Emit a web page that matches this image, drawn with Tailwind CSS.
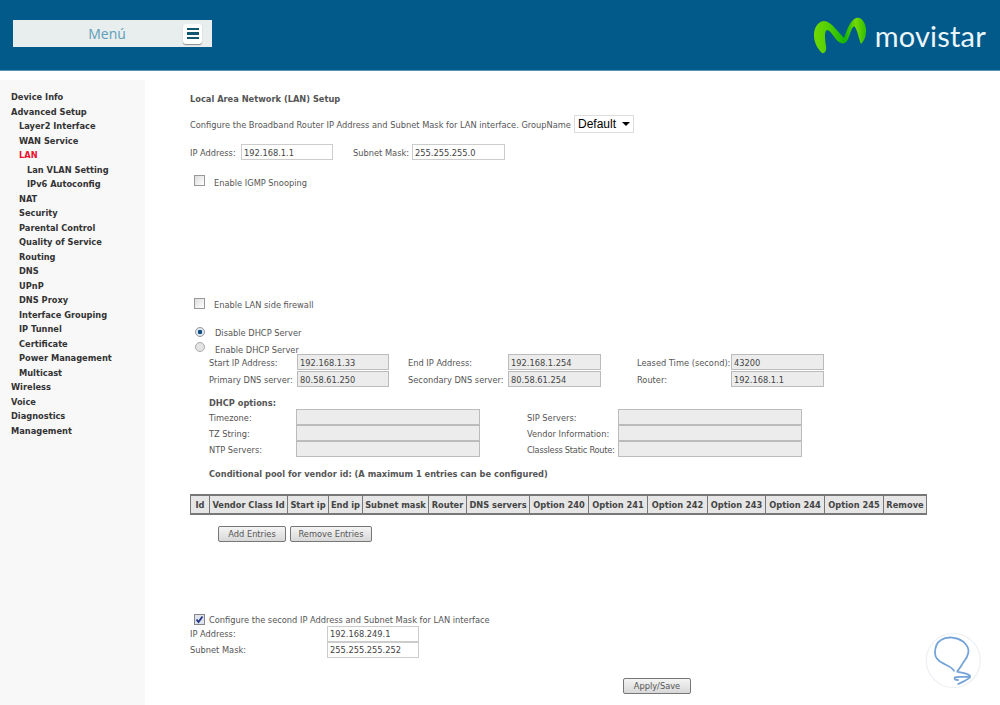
<!DOCTYPE html>
<html><head><meta charset="utf-8"><script src="https://cdn.jsdelivr.net/npm/@tailwindcss/browser@4"></script></head>
<body class="relative w-[1000px] h-[705px] overflow-hidden bg-white font-['DejaVu_Sans_Condensed','DejaVu_Sans',sans-serif] text-[9.2px] text-[#555]">
<header class="h-[71px] bg-[#025a8b] border-b border-b-[#5b93b3] flex justify-between items-start">
  <div class="ml-[13px] mt-[20px] w-[199px] h-[27px] bg-[#e8edee] flex items-center">
    <span class="w-[170px] pl-[18px] text-center font-['Open_Sans',sans-serif] text-[14px] text-[#5f9db8]">Menú</span>
    <span class="w-[19px] h-[20px] bg-white rounded-[3px] shadow-[0_1px_1px_#888] flex flex-col justify-center gap-[2px] items-center">
      <i class="block w-[12px] h-[2.5px] bg-[#10566f]"></i><i class="block w-[12px] h-[2.5px] bg-[#10566f]"></i><i class="block w-[12px] h-[2.5px] bg-[#10566f]"></i>
    </span>
  </div>
  <div class="mr-[14px] mt-[16px] flex items-center gap-[8px]">
    <svg width="53" height="40" viewBox="0 0 53 40"><defs><linearGradient id="g" x1="0" x2="1" y1="0" y2="0"><stop offset="0" stop-color="#6fd800"/><stop offset=".3" stop-color="#4fcf00"/><stop offset=".6" stop-color="#12b500"/><stop offset=".8" stop-color="#75da00"/><stop offset="1" stop-color="#2dbd00"/></linearGradient></defs>
      <path d="M0 17C1 9 6 5 10 5C17 5 25 17 30 22C32 16 36 4 42 2C48 0 53 9 52 16C52 21 50 25 47 28C45 24 44 16 41 11C38 8 36 20 33 25C31 28 28 28 25 26C21 24 17 14 13 14C10 15 11 24 12 30C13 34 11 38 8 37C4 34 -1 25 0 17Z" fill="url(#g)"/></svg>
    <span class="font-['Lato',sans-serif] text-[29px] leading-[38px] tracking-[0.2px] text-[#eaf6f8]">movistar</span>
  </div>
</header>
<div class="flex h-[634px]">
  <nav class="mt-[9px] w-[145px] bg-[#f8f8f8] pt-[10px] pl-[11px] font-bold text-[#333] leading-[14.5px]">
    <div class="h-[14.5px]">Device Info</div>
    <div class="h-[14.5px]">Advanced Setup</div>
    <div class="pl-[8px]">
      <div class="h-[14.5px]">Layer2 Interface</div>
      <div class="h-[14.5px]">WAN Service</div>
      <div class="h-[14.5px] text-[#e8112d]">LAN</div>
      <div class="pl-[8px]"><div class="h-[14.5px]">Lan VLAN Setting</div><div class="h-[14.5px]">IPv6 Autoconfig</div></div>
      <div class="h-[14.5px]">NAT</div>
      <div class="h-[14.5px]">Security</div>
      <div class="h-[14.5px]">Parental Control</div>
      <div class="h-[14.5px]">Quality of Service</div>
      <div class="h-[14.5px]">Routing</div>
      <div class="h-[14.5px]">DNS</div>
      <div class="h-[14.5px]">UPnP</div>
      <div class="h-[14.5px]">DNS Proxy</div>
      <div class="h-[14.5px]">Interface Grouping</div>
      <div class="h-[14.5px]">IP Tunnel</div>
      <div class="h-[14.5px]">Certificate</div>
      <div class="h-[14.5px]">Power Management</div>
      <div class="h-[14.5px]">Multicast</div>
    </div>
    <div class="h-[14.5px]">Wireless</div>
    <div class="h-[14.5px]">Voice</div>
    <div class="h-[14.5px]">Diagnostics</div>
    <div class="h-[14.5px]">Management</div>
  </nav>
  <main class="ml-[45px] w-[737px]">
    <div class="mt-[21px] h-[14px] leading-[14px] font-bold">Local Area Network (LAN) Setup</div>
    <div class="mt-[9px] h-[18px] flex items-center">
      <span class="w-[384px] shrink-0 pt-[2px] whitespace-nowrap">Configure the Broadband Router IP Address and Subnet Mask for LAN interface. GroupName</span>
      <span class="w-[60px] shrink-0 h-[18px] border border-[#ddd] bg-white text-black font-['Liberation_Sans',sans-serif] text-[12px] flex items-center justify-between pl-[3px] pr-[3px]">Default<i class="w-0 h-0 border-x-[4px] border-x-transparent border-t-[4px] border-t-black"></i></span>
    </div>
    <div class="mt-[11px] h-[16px] flex items-center [&>span]:pt-[2px]">
      <span class="w-[51px] shrink-0 whitespace-nowrap">IP Address:</span>
      <span class="w-[92px] h-[16px] leading-[12px] border border-[#ccc] pl-[2px] text-[#444]">192.168.1.1</span>
      <span class="ml-[20px] w-[59px] shrink-0 whitespace-nowrap">Subnet Mask:</span>
      <span class="w-[93px] h-[16px] leading-[12px] border border-[#ccc] pl-[2px] text-[#444]">255.255.255.0</span>
    </div>
    <div class="mt-[15px] h-[15px] flex items-center">
      <i class="ml-[4px] w-[11px] h-[11px] -mt-[4px] border border-[#999] bg-gradient-to-br from-[#ddd] to-white"></i>
      <span class="ml-[9px] pt-[1px]">Enable IGMP Snooping</span>
    </div>
    <div class="mt-[107px] h-[14px] flex items-center">
      <i class="ml-[4px] w-[11px] h-[11px] -mt-[2px] border border-[#999] bg-gradient-to-br from-[#ddd] to-white"></i>
      <span class="ml-[9px] pt-[2px]">Enable LAN side firewall</span>
    </div>
    <div class="mt-[15px] h-[14px] flex items-center">
      <i class="ml-[5px] w-[10px] h-[10px] -mt-[2px] rounded-full border border-[#999] bg-[radial-gradient(circle,#0b4f86_35%,#dfe6ee_45%)]"></i>
      <span class="ml-[10px]">Disable DHCP Server</span>
    </div>
    <div class="mt-[2px] h-[12px] flex items-center">
      <i class="ml-[5px] w-[10px] h-[10px] -mt-[2px] rounded-full border border-[#aaa] bg-[#e4e4e4]"></i>
      <span class="ml-[10px] mt-[3px]">Enable DHCP Server</span>
    </div>
    <div class="ml-[19px] grid grid-cols-[88px_92px_19px_100px_93px_36px_94px_93px] items-center h-[33px] gap-y-[1px] auto-rows-[16px] whitespace-nowrap [&>span]:pt-[2px]">
      <span>Start IP Address:</span><span class="h-[16px] leading-[12px] border border-[#bbb] bg-[#ececec] pl-[2px] text-[#444]">192.168.1.33</span><span></span>
      <span>End IP Address:</span><span class="h-[16px] leading-[12px] border border-[#bbb] bg-[#ececec] pl-[2px] text-[#444]">192.168.1.254</span><span></span>
      <span>Leased Time (second):</span><span class="h-[16px] leading-[12px] border border-[#bbb] bg-[#ececec] pl-[2px] text-[#444]">43200</span>
      <span>Primary DNS server:</span><span class="h-[16px] leading-[12px] border border-[#bbb] bg-[#ececec] pl-[2px] text-[#444]">80.58.61.250</span><span></span>
      <span>Secondary DNS server:</span><span class="h-[16px] leading-[12px] border border-[#bbb] bg-[#ececec] pl-[2px] text-[#444]">80.58.61.254</span><span></span>
      <span>Router:</span><span class="h-[16px] leading-[12px] border border-[#bbb] bg-[#ececec] pl-[2px] text-[#444]">192.168.1.1</span>
    </div>
    <div class="ml-[19px] mt-[10px] h-[12px] leading-[12px] font-bold">DHCP options:</div>
    <div class="ml-[19px] grid grid-cols-[87px_184px_47px_91px_184px] items-center auto-rows-[16px] whitespace-nowrap [&>span]:pt-[2px]">
      <span>Timezone:</span><span class="h-[16px] border border-[#bbb] bg-[#ececec]"></span><span></span><span>SIP Servers:</span><span class="h-[16px] border border-[#bbb] bg-[#ececec]"></span>
      <span>TZ String:</span><span class="h-[16px] border border-[#bbb] bg-[#ececec]"></span><span></span><span>Vendor Information:</span><span class="h-[16px] border border-[#bbb] bg-[#ececec]"></span>
      <span>NTP Servers:</span><span class="h-[16px] border border-[#bbb] bg-[#ececec]"></span><span></span><span class="tracking-[-0.25px]">Classless Static Route:</span><span class="h-[16px] border border-[#bbb] bg-[#ececec]"></span>
    </div>
    <div class="ml-[19px] mt-[10px] h-[14px] leading-[14px] font-bold">Conditional pool for vendor id: (A maximum 1 entries can be configured)</div>
    <table class="mt-[13px] table-fixed border-collapse w-[737px] h-[21px] bg-[#e6e6e6] border-y-2 border-y-[#777] font-bold text-center text-[#444]">
      <tr>
        <td class="w-[19px] border-x border-x-[#777] p-0">Id</td>
        <td class="w-[78px] border-x border-x-[#777] p-0">Vendor Class Id</td>
        <td class="w-[41px] border-x border-x-[#777] p-0">Start ip</td>
        <td class="w-[34px] border-x border-x-[#777] p-0">End ip</td>
        <td class="w-[66px] border-x border-x-[#777] p-0">Subnet mask</td>
        <td class="w-[38px] border-x border-x-[#777] p-0">Router</td>
        <td class="w-[63px] border-x border-x-[#777] p-0">DNS servers</td>
        <td class="w-[59px] border-x border-x-[#777] p-0">Option 240</td>
        <td class="w-[59px] border-x border-x-[#777] p-0">Option 241</td>
        <td class="w-[60px] border-x border-x-[#777] p-0">Option 242</td>
        <td class="w-[58px] border-x border-x-[#777] p-0">Option 243</td>
        <td class="w-[59px] border-x border-x-[#777] p-0">Option 244</td>
        <td class="w-[59px] border-x border-x-[#777] p-0">Option 245</td>
        <td class="w-[43px] border-x border-x-[#777] p-0">Remove</td>
      </tr>
    </table>
    <div class="ml-[28px] mt-[11px] flex gap-[4px]">
      <span class="w-[68px] h-[16px] leading-[14px] text-center border border-[#777] rounded-[2px] bg-gradient-to-b from-[#f4f4f4] to-[#d8d8d8]">Add Entries</span>
      <span class="w-[82px] h-[16px] leading-[14px] text-center border border-[#777] rounded-[2px] bg-gradient-to-b from-[#f4f4f4] to-[#d8d8d8]">Remove Entries</span>
    </div>
    <div class="mt-[71px] h-[13px] flex items-center">
      <span class="ml-[4px] w-[11px] h-[11px] border border-[#888] bg-[#dfe3ee] flex items-center justify-center">
        <svg width="9" height="9" viewBox="0 0 9 9"><path d="M1.5 4.5L3.5 7L7.5 1.5" fill="none" stroke="#24368a" stroke-width="1.8"/></svg>
      </span>
      <span class="ml-[4px]">Configure the second IP Address and Subnet Mask for LAN interface</span>
    </div>
    <div class="flex items-center h-[16px]"><span class="w-[137px]">IP Address:</span><span class="w-[92px] h-[16px] leading-[14px] border border-[#ccc] pl-[2px] text-[#444]">192.168.249.1</span></div>
    <div class="flex items-center h-[16px]"><span class="w-[137px]">Subnet Mask:</span><span class="w-[92px] h-[16px] leading-[14px] border border-[#ccc] pl-[2px] text-[#444]">255.255.255.252</span></div>
    <div class="ml-[433px] mt-[20px] w-[68px] h-[16px] leading-[14px] text-center border border-[#777] rounded-[2px] bg-gradient-to-b from-[#f4f4f4] to-[#d8d8d8]">Apply/Save</div>
  </main>
</div>
<svg class="absolute left-[925px] top-[632px]" width="57" height="57" viewBox="0 0 57 57"><circle cx="28.3" cy="28.5" r="27" fill="#fff" stroke="#eceff3" stroke-width="1.2"/><path d="M29 38.7C26 34 20 33 18.3 31.3C13 29 10 26 10 21C10 15 11 11 16 8C22 4 32 5 38.3 9.7C43 14 44 18 43.3 21C42 27 38 30 36.7 33C35 36 33 38 32.3 39.7C36 41 43 41 45 44C43 46 33 44 30 45.3C29 47 30 48 33 48M33.3 52C37 50 42 48 45 45.3" fill="none" stroke="#74a3d8" stroke-width="1.8" stroke-linecap="round"/></svg>
</body></html>
